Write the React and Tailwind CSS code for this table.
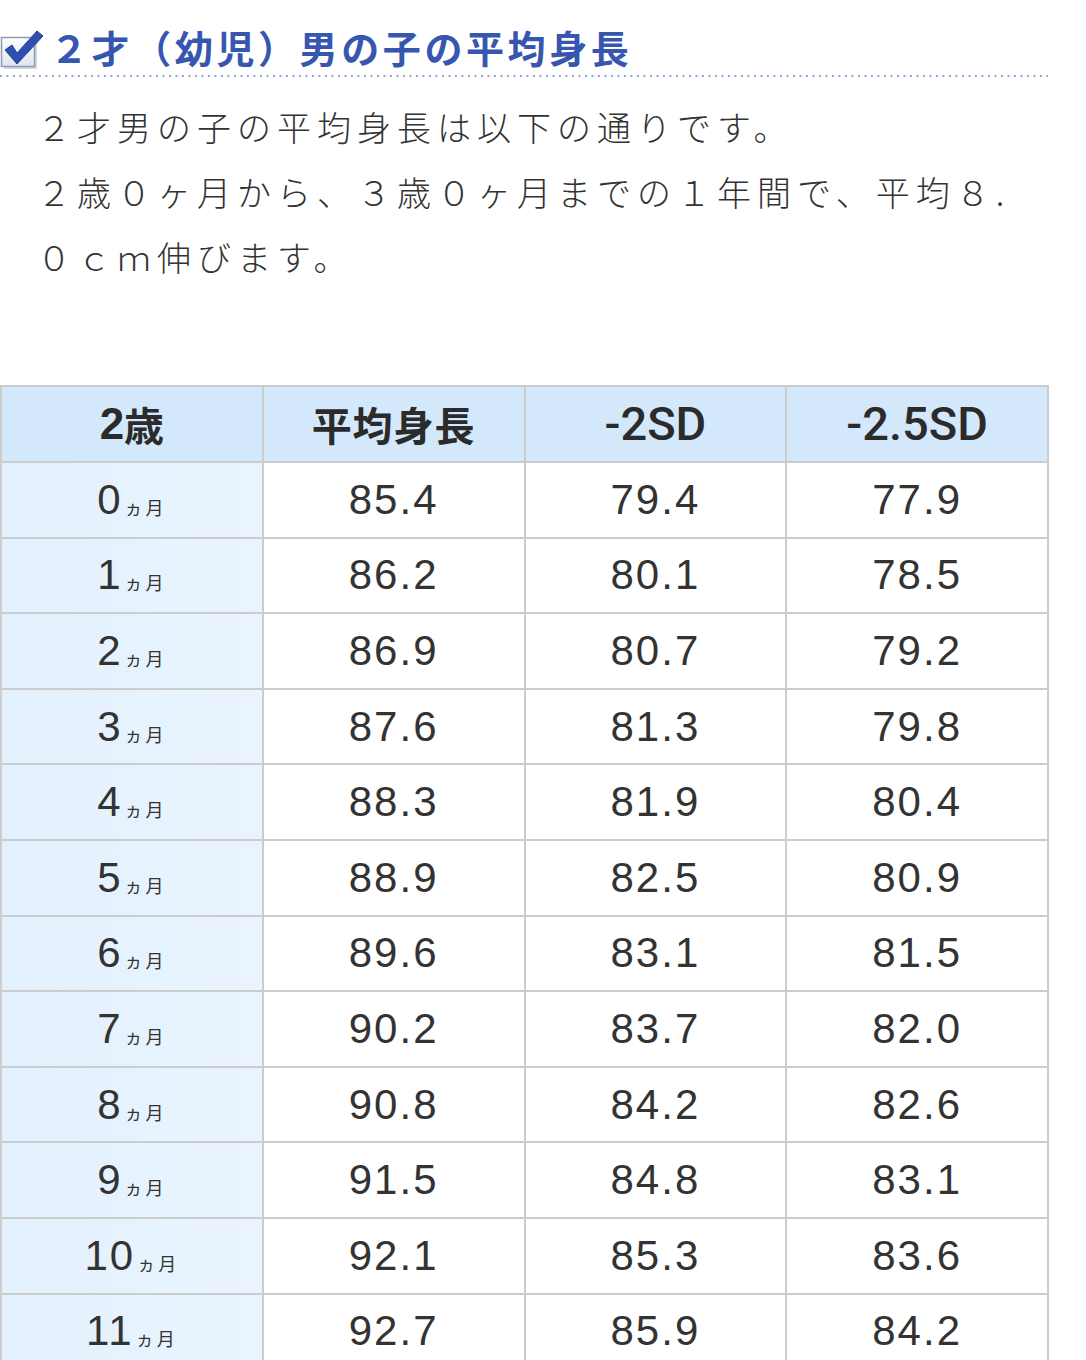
import React from "react";

const rows = [
  ["0", "85.4", "79.4", "77.9"],
  ["1", "86.2", "80.1", "78.5"],
  ["2", "86.9", "80.7", "79.2"],
  ["3", "87.6", "81.3", "79.8"],
  ["4", "88.3", "81.9", "80.4"],
  ["5", "88.9", "82.5", "80.9"],
  ["6", "89.6", "83.1", "81.5"],
  ["7", "90.2", "83.7", "82.0"],
  ["8", "90.8", "84.2", "82.6"],
  ["9", "91.5", "84.8", "83.1"],
  ["10", "92.1", "85.3", "83.6"],
  ["11", "92.7", "85.9", "84.2"],
];

function CheckIcon() {
  return (
    <svg width="46" height="46" viewBox="0 0 46 46" className="shrink-0">
      <defs>
        <linearGradient id="bx" x1="0" y1="0" x2="0" y2="1">
          <stop offset="0" stopColor="#ffffff" />
          <stop offset="1" stopColor="#dfe4ee" />
        </linearGradient>
      </defs>
      <rect x="4" y="16" width="33" height="29" fill="#b9bfca" opacity="0.6" />
      <rect x="1.5" y="13.5" width="33" height="29" fill="url(#bx)" stroke="#8e9bb3" strokeWidth="1.5" />
      <path d="M5 26 L12 21 L17 29 L37 7 L43 12 L17 40 Z" fill="#2f4fae" stroke="#25409a" strokeWidth="1" strokeLinejoin="round" />
    </svg>
  );
}

export default function App() {
  return (
    <div className="w-[1086px] bg-white font-['Noto_Sans_CJK_JP','Noto_Sans',sans-serif]">
      <div className="pt-[24px]">
        <div className="flex items-center h-[46px]">
          <CheckIcon />
          <h2 className="ml-[4px] text-[38px] font-bold leading-none text-[#3756b0] tracking-[3.6px]">
            ２才（幼児）男の子の平均身長
          </h2>
        </div>
        <div className="mt-[5px] h-[2px] w-[1048px] bg-[linear-gradient(to_right,#8c9fd6_2px,transparent_2px)] bg-[length:6.5px_2px] bg-repeat-x" />
      </div>

      <p className="mt-[17px] pl-[37px] text-[34px] font-light leading-[65px] text-[#333333] tracking-[6px] whitespace-nowrap">
        ２才男の子の平均身長は以下の通りです。
        <br />
        ２歳０ヶ月から、３歳０ヶ月までの１年間で、平均８.
        <br />
        ０ｃｍ伸びます。
      </p>

      <div className="mt-[96px] w-[1049px] bg-[#cccccc] p-[2px] grid grid-cols-4 gap-[2px] font-['Liberation_Sans','Noto_Sans_CJK_JP',sans-serif]">
        <div className="h-[74px] bg-[#d3e8fb] flex items-center justify-center text-[44px] font-bold text-[#2b2b2b]">
          2<span className="text-[40px] font-['Noto_Sans_CJK_JP',sans-serif]">歳</span>
        </div>
        <div className="h-[74px] bg-[#d3e8fb] flex items-center justify-center text-[40px] font-bold text-[#2b2b2b] tracking-[1px] font-['Noto_Sans_CJK_JP',sans-serif]">
          平均身長
        </div>
        <div className="h-[74px] bg-[#d3e8fb] flex items-center justify-center text-[47px] font-medium text-[#2b2b2b] font-['Roboto',sans-serif]">
          -2SD
        </div>
        <div className="h-[74px] bg-[#d3e8fb] flex items-center justify-center text-[47px] font-medium text-[#2b2b2b] font-['Roboto',sans-serif]">
          -2.5SD
        </div>
        {rows.map((r) => (
          <React.Fragment key={r[0]}>
            <div className="h-[73.6px] bg-[linear-gradient(to_right,#e3f0fd,#e9f4fe)] flex items-center justify-center text-[#333333]">
              <span className="text-[42px] leading-none tracking-[2px]">{r[0]}</span>
              <span className="ml-[2px] mt-[14px] text-[18px] leading-none tracking-[3px] font-['Noto_Sans_CJK_JP',sans-serif]">
                ヵ月
              </span>
            </div>
            {r.slice(1).map((v, i) => (
              <div key={i} className="h-[73.6px] bg-white flex items-center justify-center text-[42px] leading-none tracking-[2px] text-[#333333]">
                {v}
              </div>
            ))}
          </React.Fragment>
        ))}
      </div>
    </div>
  );
}
